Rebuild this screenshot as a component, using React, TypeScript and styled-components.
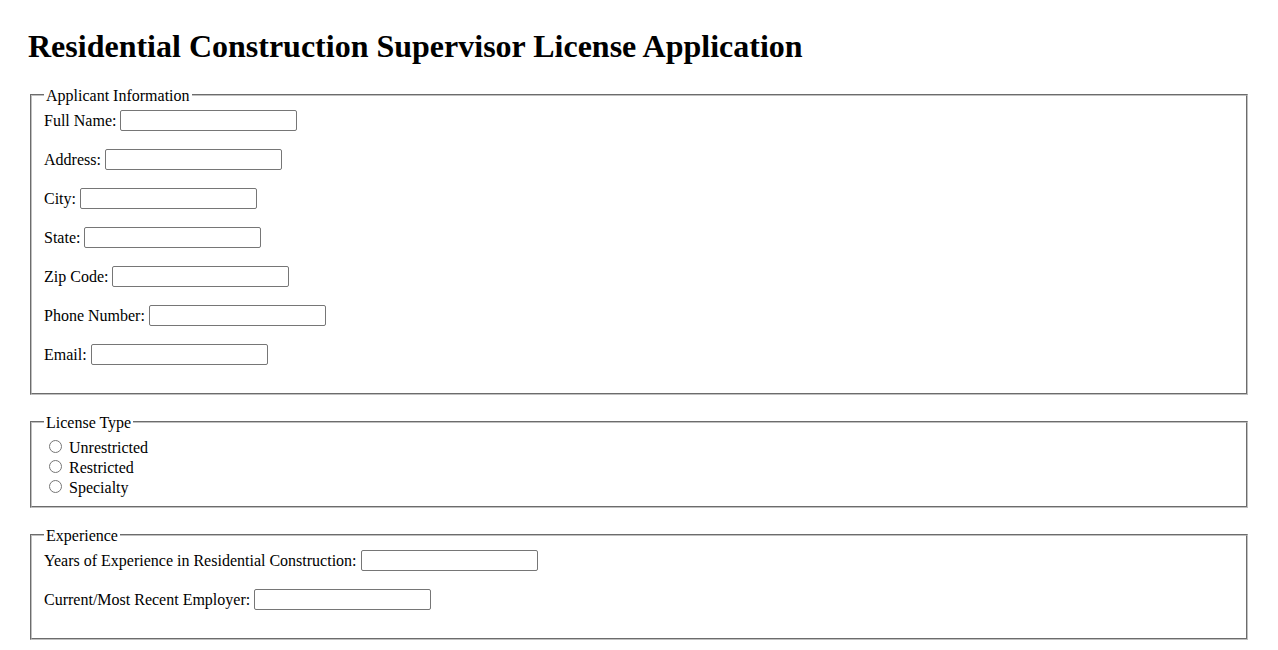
import React from "react";
import styled, { createGlobalStyle } from "styled-components";

const Global = createGlobalStyle`
  html, body { margin: 0; padding: 0; background: #fff; }
  body { font-family: "Liberation Serif", "Times New Roman", serif; font-size: 16px; color: #000; }
`;

const Page = styled.div`
  padding: 28px 28px 20px;
`;

const Title = styled.h1`
  font-size: 32px;
  font-weight: bold;
  line-height: 37px;
  margin: 0 0 21px;
`;

const Fieldset = styled.fieldset`
  margin: 0 2px 18px;
  padding: 5.6px 12px 10px;
  border: 2px groove rgb(192, 192, 192);
  min-inline-size: min-content;
`;

const Legend = styled.legend`
  padding: 1px 2px 0;
  font-size: 16px;
  line-height: 17px;
`;

const Row = styled.div`
  display: flex;
  align-items: center;
  gap: 4px;
  height: 21px;
  margin-bottom: 18px;
`;

const Label = styled.label`
  line-height: 18px;
  padding-top: 2px;
  white-space: nowrap;
`;

const TextInput = styled.input`
  box-sizing: border-box;
  width: 177px;
  height: 21px;
  padding: 1px 2px;
  border: 1px solid #767676;
  border-radius: 2px;
  font-family: "Liberation Sans", Arial, sans-serif;
  font-size: 13.333px;
  background: #fff;
`;

const RadioRow = styled.div`
  display: flex;
  align-items: center;
  height: 20px;
`;

const Radio = styled.input`
  width: 13px;
  height: 13px;
  margin: 1px 7px 0 5px;
`;

const RadioLabel = styled.label`
  line-height: 18px;
  padding-top: 4px;
  white-space: nowrap;
`;

const applicantFields = [
  ["fullName", "Full Name:"],
  ["address", "Address:"],
  ["city", "City:"],
  ["state", "State:"],
  ["zip", "Zip Code:"],
  ["phone", "Phone Number:"],
  ["email", "Email:"],
];

const experienceFields = [
  ["years", "Years of Experience in Residential Construction:"],
  ["employer", "Current/Most Recent Employer:"],
];

const licenseTypes = ["Unrestricted", "Restricted", "Specialty"];

export default function App() {
  return (
    <Page>
      <Global />
      <Title>Residential Construction Supervisor License Application</Title>
      <form>
        <Fieldset>
          <Legend>Applicant Information</Legend>
          {applicantFields.map(([id, text]) => (
            <Row key={id}>
              <Label htmlFor={id}>{text}</Label>
              <TextInput type="text" id={id} />
            </Row>
          ))}
        </Fieldset>
        <Fieldset>
          <Legend>License Type</Legend>
          {licenseTypes.map((t) => (
            <RadioRow key={t}>
              <Radio type="radio" name="licenseType" id={t} />
              <RadioLabel htmlFor={t}>{t}</RadioLabel>
            </RadioRow>
          ))}
        </Fieldset>
        <Fieldset>
          <Legend>Experience</Legend>
          {experienceFields.map(([id, text]) => (
            <Row key={id}>
              <Label htmlFor={id}>{text}</Label>
              <TextInput type="text" id={id} />
            </Row>
          ))}
        </Fieldset>
      </form>
    </Page>
  );
}
